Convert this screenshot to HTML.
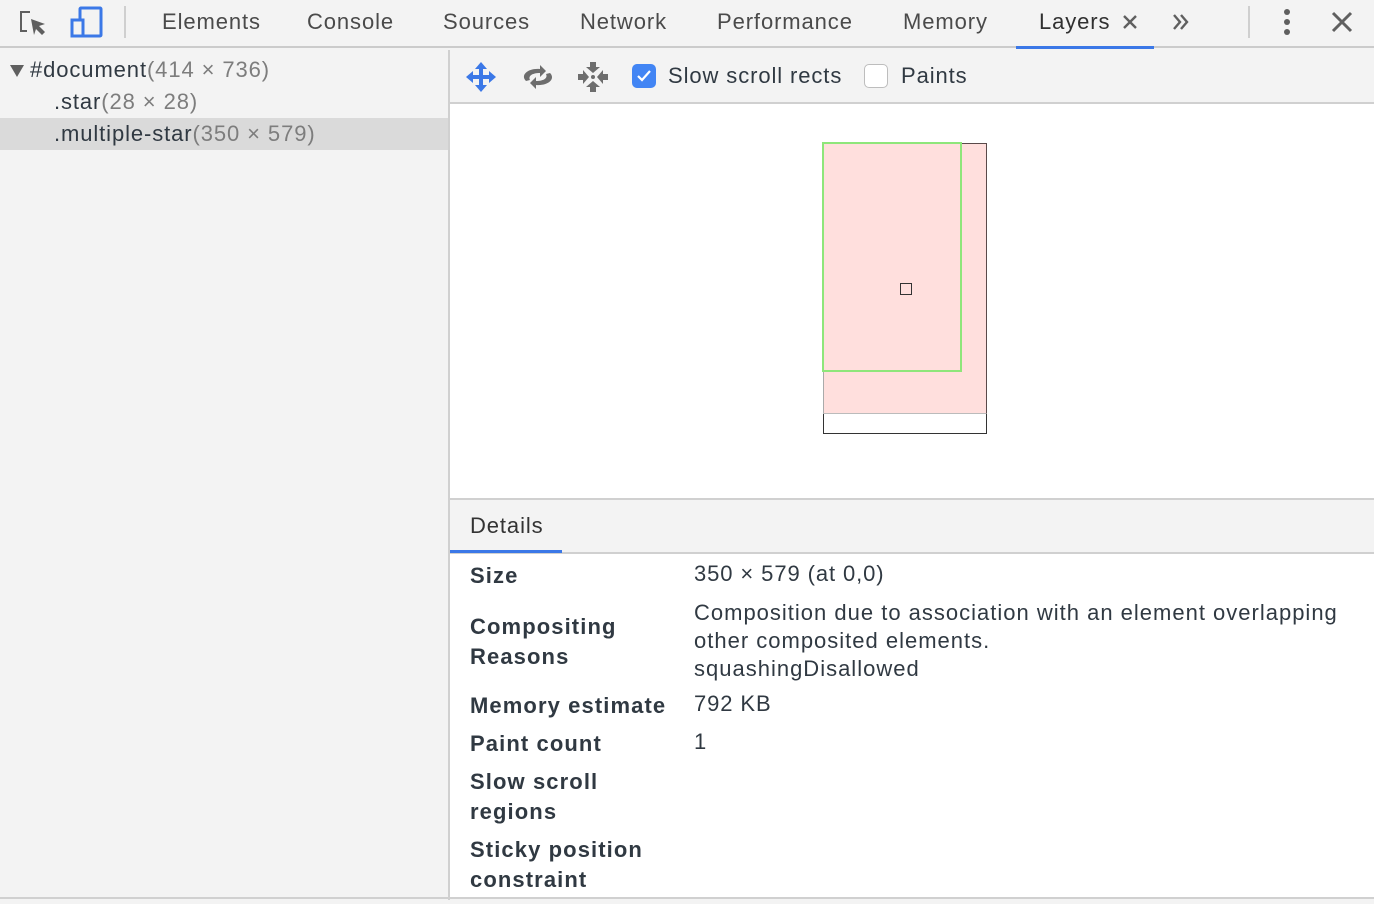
<!DOCTYPE html>
<html><head><style>
*{margin:0;padding:0;box-sizing:border-box}
body{width:1374px;height:904px;background:#f3f3f3;font-family:"Liberation Sans",sans-serif;color:#303942;position:relative;overflow:hidden;font-size:22px;letter-spacing:0.9px}
.abs{position:absolute}
.tab{position:absolute;top:9px;color:#4a4a4a;font-size:22px}
.bold{font-weight:bold;color:#303942;letter-spacing:1.1px}
.dim{color:#7d7d7d}
</style></head><body>
<div class="abs" style="left:0;top:0;width:1374px;height:48px;background:#f3f3f3;border-bottom:2px solid #cbcbcb"></div>
<svg class="abs" style="left:18px;top:8px" width="32" height="30" viewBox="0 0 32 30">
<path d="M12 4H3v19h6" fill="none" stroke="#5f5f5f" stroke-width="2"/>
<path d="M13 11l14 5-6 2 6 6-3 3-6-6-2 6z" fill="#5f5f5f"/></svg>
<svg class="abs" style="left:70px;top:6px" width="34" height="32" viewBox="0 0 34 32">
<rect x="10" y="2" width="21" height="28" rx="1" fill="none" stroke="#3b78e7" stroke-width="3"/>
<rect x="2" y="14" width="11" height="16" fill="#f3f3f3" stroke="#3b78e7" stroke-width="3"/></svg>
<div class="abs" style="left:124px;top:6px;width:2px;height:32px;background:#cfcfcf"></div>
<div class="tab" style="left:162px">Elements</div>
<div class="tab" style="left:307px">Console</div>
<div class="tab" style="left:443px">Sources</div>
<div class="tab" style="left:580px">Network</div>
<div class="tab" style="left:717px">Performance</div>
<div class="tab" style="left:903px">Memory</div>
<div class="tab" style="left:1039px;color:#303030">Layers</div>
<svg class="abs" style="left:1122px;top:14px" width="16" height="16"><path d="M2 2L14 14M14 2L2 14" stroke="#5f5f5f" stroke-width="2.4"/></svg>
<svg class="abs" style="left:1172px;top:13px" width="18" height="18"><path d="M2 2l6 7-6 7M9 2l6 7-6 7" fill="none" stroke="#5f5f5f" stroke-width="2.4"/></svg>
<div class="abs" style="left:1016px;top:46px;width:138px;height:3px;background:#3b78e7"></div>
<div class="abs" style="left:1248px;top:6px;width:2px;height:32px;background:#cfcfcf"></div>
<svg class="abs" style="left:1280px;top:8px" width="14" height="30"><circle cx="7" cy="4" r="3" fill="#5f5f5f"/><circle cx="7" cy="14" r="3" fill="#5f5f5f"/><circle cx="7" cy="24" r="3" fill="#5f5f5f"/></svg>
<svg class="abs" style="left:1331px;top:11px" width="22" height="22"><path d="M2 2L20 20M20 2L2 20" stroke="#5f5f5f" stroke-width="3"/></svg>

<div class="abs" style="left:448px;top:50px;width:2px;height:850px;background:#d0d0d0"></div>
<div class="abs" style="left:0;top:118px;width:448px;height:32px;background:#dadada"></div>
<svg class="abs" style="left:9px;top:64px" width="16" height="14"><path d="M1 1h14L8 13z" fill="#5f5f5f"/></svg>
<div class="abs" style="left:30px;top:57px">#document<span class="dim">(414 × 736)</span></div>
<div class="abs" style="left:54px;top:89px">.star<span class="dim">(28 × 28)</span></div>
<div class="abs" style="left:54px;top:121px">.multiple-star<span class="dim">(350 × 579)</span></div>

<div class="abs" style="left:450px;top:102px;width:924px;height:2px;background:#d0d0d0"></div>
<svg class="abs" style="left:465px;top:61px" width="32" height="32" viewBox="0 0 32 32">
<path d="M16 1l6 7h-4v6h6v-4l7 6-7 6v-4h-6v6h4l-6 7-6-7h4v-6H8v4l-7-6 7-6v4h6V8h-4z" fill="#3b78e7"/></svg>
<svg class="abs" style="left:520px;top:61px" width="36" height="32" viewBox="0 0 36 32">
<path d="M6 20c-6-6 2-13 14-12v-4l6 6-6 6v-4c-8 0-12 3-10 7z" fill="#6d6d6d"/>
<path d="M30 12c6 6-2 13-14 12v4l-6-6 6-6v4c8 0 12-3 10-7z" fill="#6d6d6d"/></svg>
<svg class="abs" style="left:577px;top:61px" width="32" height="32" viewBox="0 0 32 32">
<g fill="#6d6d6d"><path d="M13 1h6v5h4l-7 6-7-6h4z"/><path d="M13 31h6v-5h4l-7-6-7 6h4z"/><path d="M1 13v6h5v4l6-7-6-7v4z"/><path d="M31 13v6h-5v4l-6-7 6-7v4z"/><circle cx="16" cy="16" r="2"/></g></svg>
<div class="abs" style="left:632px;top:64px;width:24px;height:24px;border-radius:5px;background:#4285f4"></div>
<svg class="abs" style="left:632px;top:64px" width="24" height="24"><path d="M6 12l4 4 8-9" fill="none" stroke="#fff" stroke-width="2.2"/></svg>
<div class="abs" style="left:668px;top:63px;color:#303942">Slow scroll rects</div>
<div class="abs" style="left:864px;top:64px;width:24px;height:24px;border-radius:5px;background:#fff;border:1px solid #bdbdbd"></div>
<div class="abs" style="left:901px;top:63px;color:#303942">Paints</div>

<div class="abs" style="left:450px;top:104px;width:924px;height:394px;background:#fff"></div>
<div class="abs" style="left:823px;top:143px;width:164px;height:291px;border:1px solid #333;background:#fff"></div>
<div class="abs" style="left:823px;top:143px;width:164px;height:271px;background:#ffdfdd;border-right:1px solid #5a4a4a;border-top:1px solid #5a4a4a;border-bottom:1px solid #bbb;border-left:1px solid #aaa"></div>
<div class="abs" style="left:822px;top:142px;width:140px;height:230px;border:2px solid #8ee67a"></div>
<div class="abs" style="left:900px;top:283px;width:12px;height:12px;border:1px solid #333"></div>

<div class="abs" style="left:450px;top:498px;width:924px;height:2px;background:#d0d0d0"></div>
<div class="abs" style="left:450px;top:500px;width:924px;height:52px;background:#f3f3f3"></div>
<div class="abs" style="left:470px;top:513px;color:#333">Details</div>
<div class="abs" style="left:450px;top:552px;width:924px;height:2px;background:#d0d0d0"></div>
<div class="abs" style="left:450px;top:550px;width:112px;height:3px;background:#3b78e7"></div>
<div class="abs" style="left:450px;top:554px;width:924px;height:344px;background:#fff"></div>
<div class="abs" style="left:0;top:897px;width:1374px;height:2px;background:#d0d0d0"></div>

<div class="abs bold" style="left:470px;top:563px">Size</div>
<div class="abs" style="left:694px;top:561px">350 × 579 (at 0,0)</div>
<div class="abs bold" style="left:470px;top:612px;line-height:30px">Compositing<br>Reasons</div>
<div class="abs" style="left:694px;top:599px;line-height:28px;letter-spacing:1px">Composition due to association with an element overlapping<br>other composited elements.<br>squashingDisallowed</div>
<div class="abs bold" style="left:470px;top:693px">Memory estimate</div>
<div class="abs" style="left:694px;top:691px">792 KB</div>
<div class="abs bold" style="left:470px;top:731px">Paint count</div>
<div class="abs" style="left:694px;top:729px">1</div>
<div class="abs bold" style="left:470px;top:767px;line-height:30px">Slow scroll<br>regions</div>
<div class="abs bold" style="left:470px;top:835px;line-height:30px">Sticky position<br>constraint</div>
</body></html>
